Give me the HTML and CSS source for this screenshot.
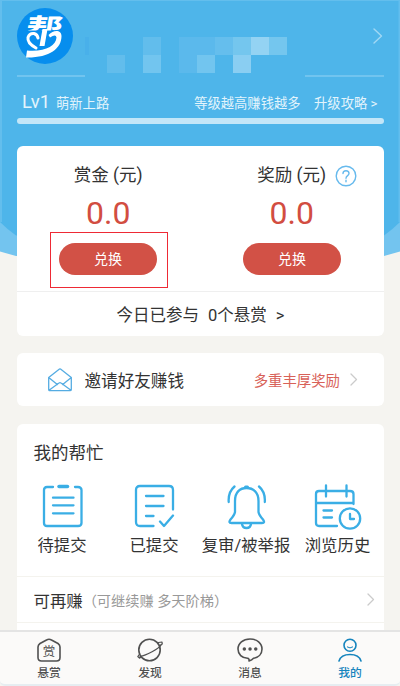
FILE: index.html
```html
<!DOCTYPE html>
<html lang="zh-CN">
<head>
<meta charset="utf-8">
<title>我的</title>
<link rel="stylesheet" href="styles.css">
</head>
<body>
<div class="app">
  <svg class="backdrop" width="400" height="300" viewBox="0 0 400 300">
    <path fill="#73c4ef" d="M0 200H400V251.500L384 256H16L0 251.500Z"/>
    <path fill="#4eb5ea" d="M0 0H400V222Q392 230 384 235.500H16Q8 230 0 222Z"/>
    <path fill="#63beed" d="M0 0H400V1H0ZM0 1H2V222H0ZM398.500 1H400V222H398.500Z"/>
  </svg>

  <header class="profile">
    <div class="profile-main">
      <svg class="avatar" width="56" height="56" viewBox="0 0 56 56">
        <clipPath id="avatar-top"><path d="M0 0H56V22.500H0Z"/></clipPath>
        <circle cx="28" cy="28" r="28" fill="#078eee"/>
        <g clip-path="url(#avatar-top)"><text class="avatar-char" transform="translate(7.500 32) skewX(-9) scale(1.25 1)">帮</text></g>
        <path fill="none" stroke="#fff" stroke-width="3" d="M19 40Q10 35 11 29.500Q12.500 25 17 25.500Q20.500 26.500 21 30"/>
        <path fill="#fff" d="M31.500 27C37 21 44.500 22 44.500 28C44.500 41 32 50 9 49.500L10 42.500C28 44 39 38 39.500 29.500Q39 25.500 33 29.500Z"/>
        <path fill="#fff" d="M25.500 21H30.500L27.500 38H22.500Z"/>
      </svg>
      <svg class="mosaic" width="204" height="36" viewBox="0 0 204 36" shape-rendering="crispEdges">
        <path fill="#49b0ea" d="M0 0H4V18H0Z"/>
        <path fill="#62bdec" d="M22 18H40V36H22ZM58 0H76V18H58ZM112 0H130V18H112Z"/>
        <path fill="#72c5ef" d="M58 18H76V36H58ZM112 18H130V36H112Z"/>
        <path fill="#5bb9ec" d="M94 0H130V18H94ZM94 18H112V36H94Z"/>
        <path fill="#65beed" d="M130 0H148V18H130Z"/>
        <path fill="#74c6ee" d="M148 0H166V18H148ZM184 0H202V18H184Z"/>
        <path fill="#94d3f3" d="M166 0H184V18H166Z"/>
        <path fill="#8acef2" d="M148 18H166V36H148Z"/>
      </svg>
      <svg class="profile-arrow" width="10" height="16" viewBox="0 0 10 16"><path d="M1 1L8.500 8L1 15"/></svg>
    </div>
    <div class="rules"><i class="rule-left"></i><i class="rule-right"></i></div>
    <div class="level">
      <span class="level-num">Lv1</span>
      <span class="level-name">萌新上路</span>
      <span class="level-tip">等级越高赚钱越多</span>
      <span class="level-guide">升级攻略 &gt;</span>
    </div>
    <div class="progress"></div>
  </header>

  <section class="card wallet">
    <div class="balances">
      <div class="balance">
        <div class="balance-title">赏金 (元)</div>
        <div class="amount">0.0</div>
        <div class="highlight"><div class="redeem">兑换</div></div>
      </div>
      <div class="balance">
        <div class="balance-title">奖励 (元)
          <svg class="help" width="22" height="22" viewBox="0 0 22 22"><circle cx="11" cy="11" r="9.800"/><path d="M8 8.500Q8 5.700 11 5.700T14 8.500C14 10.500 11 10.800 11 13.300M11 15.200V16.700"/></svg>
        </div>
        <div class="amount">0.0</div>
        <div class="plain"><div class="redeem">兑换</div></div>
      </div>
    </div>
    <div class="today"><span>今日已参与</span><span>0个悬赏</span><span>&gt;</span></div>
  </section>

  <section class="card invite">
    <svg class="mail" width="24" height="24" viewBox="0 0 24 24"><path d="M.700 9.500L11.500 1Q12 .700 12.500 1L23.300 9.500V21.500Q23.300 22.700 22 22.700H2Q.700 22.700 .700 21.500ZM.700 9.500L9.300 16.500M23.300 9.500L14.700 16.500M1 22.300L11 15Q12 14.200 13 15L23 22.300"/></svg>
    <span class="invite-text">邀请好友赚钱</span>
    <span class="invite-bonus">多重丰厚奖励</span>
    <svg class="chevron" width="8" height="13" viewBox="0 0 8 13"><path d="M1 1L6.500 6.500L1 12"/></svg>
  </section>

  <section class="card tasks">
    <h2 class="tasks-title">我的帮忙</h2>
    <div class="shortcuts">
      <div class="shortcut">
        <svg width="42" height="46" viewBox="0 0 42 46"><path d="M11 3H5Q2 3 2 6V39Q2 42 5 42H36Q39.500 42 39.500 39V6Q39.500 3 36 3H33M11 13.700H31.500M11 21.300H31.500M11 29.300H31.500"/><path stroke-width="3.500" d="M17 2.500H25.500"/></svg>
        <span>待提交</span>
      </div>
      <div class="shortcut">
        <svg width="42" height="46" viewBox="0 0 42 46"><path d="M19.500 42H6Q2 42 2 38V6Q2 2 6 2H35Q39 2 39 6V25.500M12 12H29.500M12 22H29.500M12 32H19.500M26 37.500L30 42L39 31.500"/></svg>
        <span>已提交</span>
      </div>
      <div class="shortcut">
        <svg width="42" height="46" viewBox="0 0 42 46"><path d="M9 28V17C9 8 14 4 20.500 4S32.500 8 32.500 17V28Q33 31 37 35.500Q39.500 39 36 39H5.500Q2 39 4.500 35.500Q8.500 31 9 28ZM16 40Q16.500 44 20.500 44T25 40M2.700 18Q2 8 8.500 2.500M38.800 18Q39.500 8 33 2.500"/><path stroke-width="3" d="M19.500 3H21.500"/></svg>
        <span>复审/被举报</span>
      </div>
      <div class="shortcut">
        <svg width="48" height="46" viewBox="0 0 48 46"><path d="M23 42H5Q2 42 2 39V10Q2 7 5 7H36Q39.500 7 39.500 10V20M2 19H39.500M12 1.500V12.500M32.500 1.500V12.500M9.500 26.500H18M9.500 33.500H18M36 30V35H40"/><circle cx="36" cy="34.500" r="10.200"/></svg>
        <span>浏览历史</span>
      </div>
    </div>
    <div class="again">
      <span class="again-title">可再赚</span>
      <span class="again-note">（可继续赚 多天阶梯）</span>
      <svg class="chevron" width="8" height="13" viewBox="0 0 8 13"><path d="M1 1L6.500 6.500L1 12"/></svg>
    </div>
  </section>

  <nav class="tabs">
    <div class="tab">
      <svg width="26" height="25" viewBox="0 0 26 25"><path d="M10.500 2Q13 .500 15.500 2L22 5.500Q24 7 24 9V19.500Q24 23 20.500 23H5.500Q2 23 2 19.500V9Q2 7 4 5.500Z"/><text class="tab-char" x="13" y="18" text-anchor="middle">赏</text></svg>
      <span>悬赏</span>
    </div>
    <div class="tab">
      <svg width="26" height="25" viewBox="0 0 26 25"><circle cx="12.500" cy="12" r="10.700"/><path class="ring" d="M22.500 7.500L25.300 6L25 4L21.500 4.500M24.500 6.500C22 11 9 17.500 3 18.500M2.800 15.800L.800 18.500L2.500 20.200L4.500 18.500"/></svg>
      <span>发现</span>
    </div>
    <div class="tab">
      <svg width="26" height="25" viewBox="0 0 26 25"><path d="M13 1C6 1 1 5.300 1 11C1 16.500 5 20 10.500 20.300Q12.500 20.500 12 23Q15 22 16.500 20.300C21.500 19.500 25 16 25 11C25 5.300 20 1 13 1Z"/><path class="dots" d="M7.300 11H7.400M13 11H13.100M18.700 11H18.800"/></svg>
      <span>消息</span>
    </div>
    <div class="tab active">
      <svg width="26" height="25" viewBox="0 0 26 25"><circle cx="13" cy="7.300" r="6"/><path d="M2 23Q4 16.500 13 16.500T24 23"/><path class="smile" d="M10.300 9Q13 11 15.700 9"/></svg>
      <span>我的</span>
    </div>
  </nav>
</div>
</body>
</html>
```
FILE: styles.css
```css
* { box-sizing: border-box; }

body {
  margin: 0;
  background: #f5f4f0;
  font-family: Roboto, "Noto Sans CJK SC", sans-serif;
  color: #333;
  white-space: nowrap;
}

svg {
  display: block;
  flex: none;
  fill: none;
  stroke-linecap: round;
  stroke-linejoin: round;
}

.app {
  position: relative;
  display: flex;
  flex-direction: column;
  width: 400px;
  height: 686px;
  overflow: hidden;
}

.backdrop {
  position: absolute;
  top: 0;
  left: 0;
  z-index: -1;
}

.profile {
  flex: none;
  height: 146px;
  padding: 8px 16px 0 17px;
  color: #e3f4fc;
}

.profile-main { display: flex; height: 67px; }
.avatar-char {
  fill: #fff;
  stroke: none;
  font: 700 29px "Noto Sans CJK SC", sans-serif;
}
.mosaic { margin: 29px 0 0 12px; }
.profile-arrow {
  margin: 20px 1px 0 auto;
  stroke: #a1d8f4;
  stroke-width: 1.4;
}

.rules { display: flex; justify-content: space-between; height: 2px; }
.rules i { height: 2px; background: #71c4ef; }
.rule-left { width: 68px; }
.rule-right { width: 79px; }

.level { display: flex; height: 41px; align-items: center; padding: 12px 6.5px 0 5px; font-size: 13.3px; line-height: 20px; }
.level-num { width: 34px; font-size: 18.5px; margin-top: -4px; }
.level-tip { margin-left: auto; }
.level-guide { margin-left: 13.5px; }
.progress { height: 6px; border-radius: 3px; background: #c3e6f8; }

.card {
  flex: none;
  width: 367px;
  margin-left: 16.5px;
  border-radius: 6px;
  background: #fff;
}

.wallet { height: 190px; }
.balances { display: flex; height: 146px; border-bottom: 1px solid #efefef; }
.balance { width: 183.5px; text-align: center; }
.balance-title { position: relative; height: 49px; padding-top: 16px; font-size: 17.5px; line-height: 26px; }
.help {
  position: absolute;
  left: 134.5px;
  top: 19px;
  stroke: #67baed;
  stroke-width: 1.4;
}
.amount { height: 37px; color: #d24d41; font-size: 32px; line-height: 36px; }
.highlight { width: 118px; height: 56px; margin: 0 0 0 33.5px; padding: 10px 9px; border: 1.5px solid #ee2a35; }
.plain { width: 118px; height: 56px; margin: 0 0 0 33px; padding: 11px 10px; }
.highlight .redeem { margin-left: -1px; }
.redeem { width: 98px; height: 32px; border-radius: 16px; background: #d25146; color: #fff; font-size: 14px; line-height: 32px; }
.today { display: flex; gap: 9px; padding: 12px 0 0 100px; font-size: 16.5px; line-height: 24px; }

.invite { display: flex; align-items: center; height: 53px; margin-top: 17px; padding: 0 25.5px 0 31.5px; }
.mail { stroke: #55ace2; stroke-width: 1.3; }
.invite-text { margin-left: 12.5px; font-size: 16.6px; }
.invite-bonus { margin: 0 10px 0 auto; color: #d86158; font-size: 14.4px; }
.chevron { stroke: #cbcbcb; stroke-width: 1.3; }

.tasks { height: 240px; margin-top: 18px; }
.tasks-title { height: 60px; margin: 0; padding: 16px 0 0 17px; font-size: 17.5px; line-height: 26px; font-weight: 400; }
.shortcuts { display: flex; height: 92px; }
.shortcut { display: flex; flex-direction: column; align-items: center; width: 92px; font-size: 16.4px; line-height: 24px; }
.shortcut:last-child { width: 91px; }
.shortcut svg { stroke: #3aaee5; stroke-width: 2.3; overflow: visible; }
.shortcut span { margin-top: 4px; margin-left: -1px; }

.again { display: flex; align-items: center; height: 47px; padding: 0 9px 0 17px; border-top: 1px solid #f4f3ee; border-bottom: 1px solid #f4f3ee; }
.again-title { font-size: 16.4px; }
.again-note { color: #999; font-size: 14.2px; }
.again .chevron { margin-left: auto; }

.tabs {
  position: absolute;
  left: 0;
  right: 0;
  bottom: 0;
  display: flex;
  height: 56px;
  padding-top: 6px;
  border-top: 2px solid #e4e4e4;
  border-bottom: 2px solid #e6edf1;
  background: #fbfaf9;
  border-radius: 0 0 5px 5px;
}
.tab { display: flex; flex-direction: column; align-items: center; width: 100px; color: #505050; font-size: 11.8px; font-weight: 500; line-height: 21px; }
.tab svg { stroke: currentColor; stroke-width: 1.6; }
.tab:first-child { padding-right: 2px; }
.tab-char { fill: currentColor; stroke: none; font: 12.5px "Noto Sans CJK SC", sans-serif; }
.tab .dots { stroke-width: 3.4; }
.tab .ring { stroke-width: 1.2; }
.tab .smile { stroke-width: 1; }
.active { color: #1584bd; }
```
